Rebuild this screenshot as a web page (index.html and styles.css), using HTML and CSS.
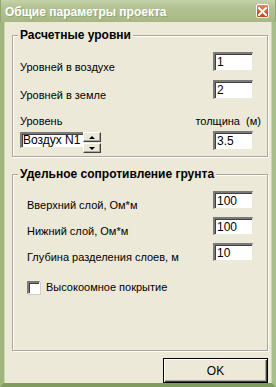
FILE: index.html
```html
<!DOCTYPE html>
<html lang="ru">
<head>
    <meta charset="UTF-8">
    <title>Общие параметры проекта</title>
    <link rel="stylesheet" href="styles.css">
</head>
<body>
    <div class="window">
        <div class="titlebar">
            <span class="title">Общие параметры проекта</span>
            <span class="close">
                <svg width="9" height="9" viewBox="0 0 9 9"><path d="M1 1L8 8M8 1L1 8" stroke="#fff" stroke-width="2" stroke-linecap="square"/></svg>
            </span>
        </div>
        <div class="client">
            <div class="group group-levels">
                <div class="caption">Расчетные уровни</div>
                <div class="row first">
                    <span class="label">Уровней в воздухе</span>
                    <span class="edit">1</span>
                </div>
                <div class="row">
                    <span class="label">Уровней в земле</span>
                    <span class="edit">2</span>
                </div>
                <div class="row heads">
                    <span>Уровень</span>
                    <span class="thick">толщина  (м)</span>
                </div>
                <div class="row level">
                    <div class="spin">
                        <span class="spin-edit">Воздух N1</span>
                        <div class="spin-buttons">
                            <span class="spin-btn"><i class="arrow up"></i></span>
                            <span class="spin-btn"><i class="arrow down"></i></span>
                        </div>
                    </div>
                    <span class="edit">3.5</span>
                </div>
            </div>

            <div class="group group-soil">
                <div class="caption">Удельное сопротивление грунта</div>
                <div class="row first">
                    <span class="label">Вверхний слой, Ом*м</span>
                    <span class="edit">100</span>
                </div>
                <div class="row">
                    <span class="label">Нижний слой, Ом*м</span>
                    <span class="edit">100</span>
                </div>
                <div class="row">
                    <span class="label">Глубина разделения слоев, м</span>
                    <span class="edit">10</span>
                </div>
                <div class="check-row">
                    <span class="checkbox"></span>
                    <span>Высокоомное покрытие</span>
                </div>
            </div>

            <div class="buttons">
                <button class="btn-ok">OK</button>
            </div>
        </div>
    </div>
</body>
</html>
```

FILE: styles.css
```css
body {
    margin: 0;
    font-family: "Liberation Sans", Arial, sans-serif;
    font-size: 11px;
    color: #000;
    background: #ece9d8;
}
.window {
    width: 276px;
    height: 387px;
    display: flex;
    flex-direction: column;
    background: #ece9d8;
}
.titlebar {
    height: 22px;
    flex: none;
    display: flex;
    align-items: center;
    justify-content: space-between;
    padding: 0 6px 0 4px;
    background: linear-gradient(#c5d3a8, #b3c393 30%, #adbd8c 70%, #a6b784);
    border-left: 1px solid #8fa670;
    border-right: 1px solid #8fa670;
}
.title {
    color: #fff;
    font-weight: bold;
    font-size: 12px;
    text-shadow: 1px 1px 0 #93a377;
    margin-top: 1px;
}
.close {
    width: 13px;
    height: 14px;
    box-sizing: border-box;
    border: 1px solid #fff;
    border-radius: 2px;
    background: linear-gradient(#e98a63, #d6532b 60%, #c8441f);
    display: flex;
    align-items: center;
    justify-content: center;
}
.close svg {
    display: block;
}
.client {
    flex: 1;
    display: flex;
    flex-direction: column;
    padding: 13px 4px 0 8px;
    border-left: 4px solid #9cb67c;
    border-right: 4px solid #a7bf88;
    border-bottom: 4px solid #7f9c5e;
    box-shadow: inset 1px 0 0 #c9d8b1, inset -1px 0 0 #c9d8b1;
}
.group {
    border: 1px solid #aca899;
    box-shadow: inset 1px 1px 0 #fff, 1px 1px 0 #fff;
    padding: 0 14px 0 7px;
    display: flex;
    flex-direction: column;
}
.group-levels {
    height: 122px;
    box-sizing: border-box;
}
.group-soil {
    height: 177px;
    box-sizing: border-box;
    margin-top: 17px;
    padding-left: 14px;
}
.caption {
    align-self: flex-start;
    margin: -8px 0 0 -2px;
    padding: 0 2px;
    background: #ece9d8;
    font-weight: bold;
    font-size: 12px;
    line-height: 14px;
}
.group-soil .caption {
    margin-left: -9px;
}
.row {
    display: flex;
    justify-content: space-between;
    align-items: flex-start;
    margin-top: 6px;
}
.row.first {
    margin-top: 10px;
}
.label {
    padding-top: 9px;
    line-height: 13px;
}
.group-soil .row {
    margin-top: 5px;
}
.group-soil .row.first {
    margin-top: 10px;
}
.group-soil .label {
    padding-top: 8px;
}
.edit {
    width: 40px;
    height: 19px;
    box-sizing: border-box;
    background: #fff;
    border-style: solid;
    border-width: 2px 1px 1px 2px;
    border-color: #7a7a7a #ece9d8 #ece9d8 #7a7a7a;
    box-shadow: inset 1px 1px 0 #404040;
    padding: 1px 0 0 2px;
    font-size: 12px;
    line-height: 14px;
}
.group-soil .edit {
    height: 18px;
}
.row.heads {
    margin-top: 13px;
    line-height: 13px;
}
.thick {
    white-space: pre;
    margin-right: -8px;
}
.row.level {
    margin-top: 3px;
}
.spin {
    display: flex;
    margin-top: 1px;
}
.spin-edit {
    width: 63px;
    height: 16px;
    box-sizing: border-box;
    background: #fff;
    border-style: solid;
    border-width: 2px 0 1px 2px;
    border-color: #7a7a7a #ece9d8 #ece9d8 #7a7a7a;
    box-shadow: inset 1px 1px 0 #404040;
    padding-left: 1px;
    font-size: 12px;
    line-height: 13px;
    white-space: nowrap;
}
.spin-buttons {
    display: flex;
    flex-direction: column;
    gap: 1px;
}
.spin-btn {
    width: 18px;
    height: 10px;
    box-sizing: border-box;
    border-style: solid;
    border-width: 1px;
    border-color: #fff #404040 #404040 #fff;
    box-shadow: inset -1px -1px 0 #aca899;
    background: #ece9d8;
    display: flex;
    align-items: center;
    justify-content: center;
}
.arrow {
    width: 0;
    height: 0;
    border-left: 3px solid transparent;
    border-right: 3px solid transparent;
}
.arrow.up {
    border-bottom: 3px solid #000;
}
.arrow.down {
    border-top: 3px solid #000;
}
.check-row {
    display: flex;
    align-items: center;
    gap: 6px;
    margin-top: 17px;
    line-height: 13px;
}
.checkbox {
    width: 13px;
    height: 13px;
    box-sizing: border-box;
    background: #fff;
    border-style: solid;
    border-width: 2px 1px 1px 2px;
    border-color: #7a7a7a #fff #fff #7a7a7a;
    box-shadow: inset 1px 1px 0 #404040, 1px 1px 0 #d4d0c8;
}
.buttons {
    display: flex;
    justify-content: flex-end;
    margin-top: 7px;
}
.btn-ok {
    width: 105px;
    height: 25px;
    box-sizing: border-box;
    border: 1px solid #000;
    background: #ece9d8;
    box-shadow: inset 1px 1px 0 #fff, inset -1px -1px 0 #404040, inset -2px -2px 0 #aca899;
    font-family: "Liberation Sans", Arial, sans-serif;
    font-size: 12px;
    padding: 0;
    color: #000;
}
```
